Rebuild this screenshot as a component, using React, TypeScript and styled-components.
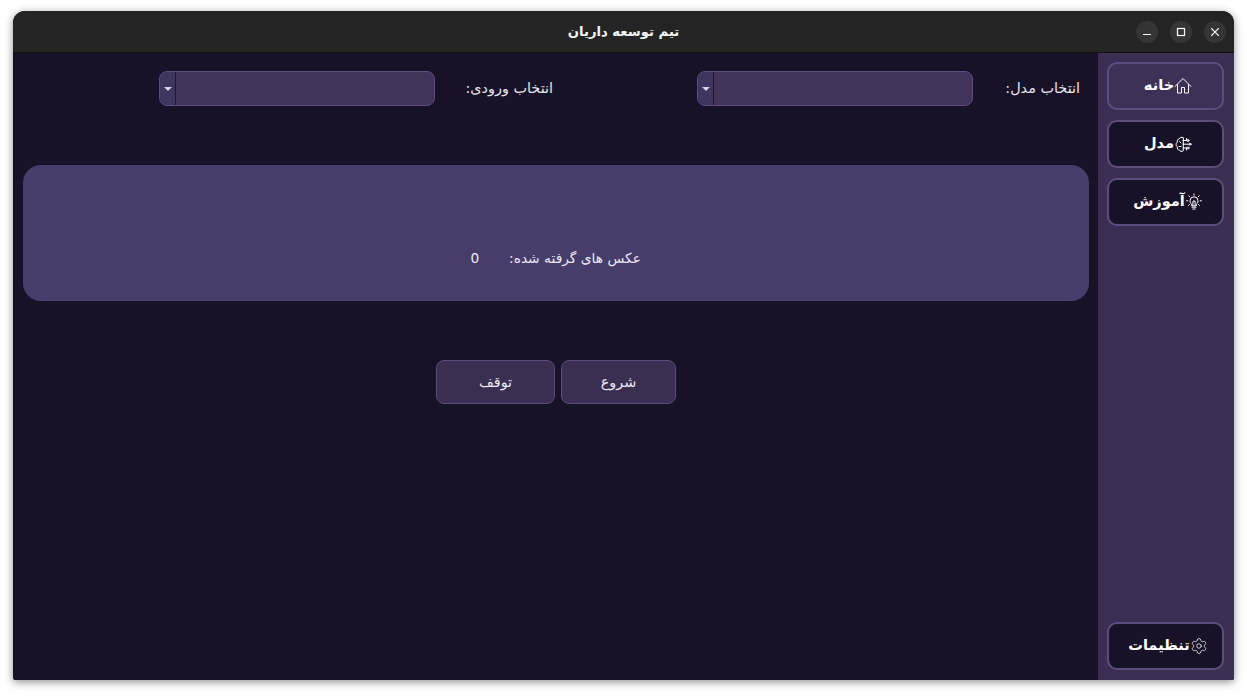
import { Settings } from 'lucide-react';
import type { ReactNode } from 'react';
import styled, { createGlobalStyle } from 'styled-components';

const GlobalStyle = createGlobalStyle`
  html, body {
    margin: 0;
    height: 100%;
    background: #ffffff;
  }

  body {
    font-family: 'DejaVu Sans', 'Noto Sans', sans-serif;
  }
`;

const Page = styled.div`
  box-sizing: border-box;
  width: 1247px;
  height: 696px;
  padding: 11px 13px 16px;
`;

const Window = styled.div`
  display: flex;
  flex-direction: column;
  height: 669px;
  overflow: hidden;
  border-radius: 12px 12px 2px 2px;
  background: #181229;
  box-shadow: 0 2px 9px rgba(0, 0, 0, 0.45);
`;

const TitleBar = styled.header`
  position: relative;
  display: flex;
  flex: none;
  align-items: center;
  justify-content: flex-end;
  gap: 12px;
  box-sizing: border-box;
  height: 42px;
  padding: 0 8px 0 0;
  border-bottom: 1px solid #121212;
  background: #242424;
`;

const Title = styled.h1`
  position: absolute;
  top: 13px;
  left: 0;
  right: 0;
  margin: 0;
  color: #f4f4f4;
  font-size: 13.2px;
  font-weight: 700;
  text-align: center;
`;

const WindowButton = styled.button`
  position: relative;
  display: grid;
  place-items: center;
  width: 22px;
  height: 22px;
  padding: 0;
  border: 0;
  border-radius: 50%;
  background: #353535;
  color: #ffffff;
`;

const Body = styled.div`
  display: flex;
  flex: 1;
  min-height: 0;
`;

const Main = styled.main`
  flex: 1;
  min-width: 0;
  padding-top: 18px;
`;

const SelectRow = styled.div`
  display: flex;
  align-items: center;
  padding: 0 18px 0 146px;
`;

const SelectGroup = styled.div`
  display: flex;
  align-items: center;
  gap: 31px;
`;

const SelectBox = styled.div`
  display: flex;
  box-sizing: border-box;
  width: 276px;
  height: 35px;
  overflow: hidden;
  border: 1px solid #5d4e7f;
  border-radius: 8px;
  background: #413359;
`;

const SelectArrow = styled.span`
  display: grid;
  place-items: center;
  width: 15px;
  border-right: 1px solid #1d1630;
  background: #40355f;

  &::after {
    content: '';
    border-top: 4px solid #d8d2e6;
    border-left: 4px solid transparent;
    border-right: 4px solid transparent;
  }
`;

const FieldLabel = styled.label<{ $width: number }>`
  width: ${({ $width }) => $width}px;
  margin-top: -2px;
  color: #e9e6f0;
  font-size: 14.4px;
  text-align: right;
  direction: rtl;
  white-space: nowrap;
`;

const Spacer = styled.div`
  flex: 1;
`;

const CounterPanel = styled.section`
  display: flex;
  align-items: center;
  gap: 29px;
  box-sizing: border-box;
  height: 136px;
  margin: 59px 9px 0 10px;
  padding: 50px 0 0 447px;
  border-radius: 18px;
  background: #473d6b;
  color: #ece9f3;
  font-size: 13.8px;
`;

const CounterValue = styled.span`
  width: 10px;
  text-align: center;
`;

const CounterLabel = styled.span`
  direction: rtl;
  white-space: nowrap;
`;

const ActionRow = styled.div`
  display: flex;
  gap: 6px;
  margin-top: 59px;
  padding-left: 423px;
`;

const ActionButton = styled.button<{ $width: number }>`
  box-sizing: border-box;
  width: ${({ $width }) => $width}px;
  height: 44px;
  padding: 0;
  border: 1px solid #5a4c78;
  border-radius: 8px;
  background: #3a2f50;
  color: #ece9f3;
  font-family: inherit;
  font-size: 14.4px;
`;

const Sidebar = styled.nav`
  display: flex;
  flex: none;
  flex-direction: column;
  gap: 10px;
  box-sizing: border-box;
  width: 136px;
  padding: 9px 10px 10px 9px;
  background: #3b2e55;
`;

const NavButton = styled.button<{ $active?: boolean; $pushed?: boolean }>`
  display: flex;
  align-items: center;
  justify-content: center;
  gap: 0;
  box-sizing: border-box;
  width: 117px;
  height: 48px;
  margin-top: ${({ $pushed }) => ($pushed ? 'auto' : '0')};
  padding: 0 0 0 5px;
  border: 2px solid #5d4d7e;
  border-radius: 10px;
  background: ${({ $active }) => ($active ? '#3e3157' : '#181229')};
  color: #ffffff;
  font-family: inherit;
  font-size: 14.6px;
  font-weight: 700;
`;

const NavText = styled.span`
  margin-top: -3px;
  direction: rtl;
`;

const IconSvg = styled.svg`
  flex: none;
  width: 18px;
  height: 18px;
  fill: none;
  stroke: currentColor;
  stroke-width: 1;
  stroke-linecap: round;
  stroke-linejoin: round;
`;

function HomeIcon() {
  return (
    <IconSvg viewBox="0 0 18 18">
      <path d="M1 9.5 9 1.5l8 8" />
      <path d="M3.5 7.5v8.5h4v-5.5h3V16h4V7.5" />
    </IconSvg>
  );
}

function BrainCircuitIcon() {
  return (
    <IconSvg viewBox="0 0 18 18">
      <path d="M9 2.5C7.5 1.8 5.8 2.4 5.4 3.8 3.6 4 2.8 5.8 3.4 7.2 1.6 8.3 1.6 10.8 3.4 11.8 2.8 13.4 3.8 15 5.4 15.1 6 16.4 7.8 16.9 9 16Z" />
      <path d="M9 5.5H12.5M9 9.2H15M9 13H12.5M12.5 5.5V3.5M12.5 13V15M5.5 6.5 7 8M5 11.5H7" />
      <circle cx="14" cy="5.5" r="1" />
      <circle cx="16" cy="9.2" r="1" />
      <circle cx="14" cy="13" r="1" />
    </IconSvg>
  );
}

function BulbIcon() {
  return (
    <IconSvg viewBox="0 0 18 18">
      <path d="M6.8 12.5C6.8 11 5 10 5 7.8a4 4 0 0 1 8 0C13 10 11.2 11 11.2 12.5Z" />
      <path d="M7 14.2H11M7.8 16H10.2M7.8 12.5 8 8H10L10.2 12.5" />
      <path d="M9 1V2.2M3.8 2.8 4.7 3.7M14.2 2.8 13.3 3.7M1.6 7.8H2.8M15.2 7.8H16.4M3.5 12.5 4.4 11.6M14.5 12.5 13.6 11.6" />
    </IconSvg>
  );
}

const ControlSvg = styled.svg`
  width: 12px;
  height: 12px;
  fill: none;
  stroke: currentColor;
  stroke-width: 1.2;
`;

type NavItemProps = {
  icon: ReactNode;
  label: string;
  active?: boolean;
  pushed?: boolean;
};

function NavItem({ icon, label, active, pushed }: NavItemProps) {
  return (
    <NavButton type="button" $active={active} $pushed={pushed}>
      <NavText>{label}</NavText>
      {icon}
    </NavButton>
  );
}

export default function App() {
  return (
    <Page>
      <GlobalStyle />
      <Window>
        <TitleBar>
          <Title dir="rtl">تیم توسعه داریان</Title>
          <WindowButton type="button" aria-label="minimize">
            <ControlSvg viewBox="0 0 12 12">
              <path d="M2 8.5H10" />
            </ControlSvg>
          </WindowButton>
          <WindowButton type="button" aria-label="maximize">
            <ControlSvg viewBox="0 0 12 12">
              <rect x="2.5" y="2.5" width="7" height="7" />
            </ControlSvg>
          </WindowButton>
          <WindowButton type="button" aria-label="close">
            <ControlSvg viewBox="0 0 12 12">
              <path d="M2.2 2.2 9.8 9.8M9.8 2.2 2.2 9.8" />
            </ControlSvg>
          </WindowButton>
        </TitleBar>
        <Body>
          <Main>
            <SelectRow>
              <SelectGroup>
                <SelectBox>
                  <SelectArrow />
                </SelectBox>
                <FieldLabel $width={87}>انتخاب ورودی:</FieldLabel>
              </SelectGroup>
              <Spacer />
              <SelectGroup>
                <SelectBox>
                  <SelectArrow />
                </SelectBox>
                <FieldLabel $width={76}>انتخاب مدل:</FieldLabel>
              </SelectGroup>
            </SelectRow>
            <CounterPanel>
              <CounterValue>0</CounterValue>
              <CounterLabel>عکس های گرفته شده:</CounterLabel>
            </CounterPanel>
            <ActionRow>
              <ActionButton type="button" $width={119}>توقف</ActionButton>
              <ActionButton type="button" $width={115}>شروع</ActionButton>
            </ActionRow>
          </Main>
          <Sidebar>
            <NavItem active label="خانه" icon={<HomeIcon />} />
            <NavItem label="مدل" icon={<BrainCircuitIcon />} />
            <NavItem label="آموزش" icon={<BulbIcon />} />
            <NavItem pushed label="تنظیمات" icon={<Settings size={18} strokeWidth={1} />} />
          </Sidebar>
        </Body>
      </Window>
    </Page>
  );
}
